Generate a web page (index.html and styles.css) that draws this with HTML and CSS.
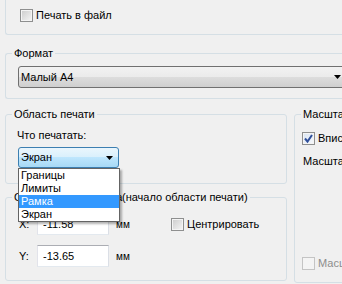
FILE: index.html
```html
<!DOCTYPE html>
<html>
<head>
    <title>Печать</title>
    <link rel="stylesheet" href="styles.css">
</head>
<body>
    <div class="dialog">
        <div class="file-box">
            <label class="check"><span class="box"></span>Печать в файл</label>
        </div>

        <fieldset class="group format-group">
            <legend>Формат</legend>
            <div class="combo combo-wide">
                <span class="combo-text">Малый A4</span>
                <svg class="arrow" width="7" height="4" viewBox="0 0 7 4"><path d="M0 0h7L3.5 4z"/></svg>
            </div>
        </fieldset>

        <div class="columns">
            <div class="left-col">
                <fieldset class="group area-group">
                    <legend>Область печати</legend>
                    <div class="field-label">Что печатать:</div>
                    <div class="combo-wrap">
                        <div class="combo combo-hot">
                            <span class="combo-text">Экран</span>
                            <svg class="arrow" width="7" height="4" viewBox="0 0 7 4"><path d="M0 0h7L3.5 4z"/></svg>
                        </div>
                        <ul class="dropdown">
                            <li>Границы</li>
                            <li>Лимиты</li>
                            <li class="selected">Рамка</li>
                            <li>Экран</li>
                        </ul>
                    </div>
                </fieldset>

                <fieldset class="group offset-group">
                    <legend><span class="legend-lead">Смещение от начала</span>(начало области печати)</legend>
                    <div class="offset-row">
                        <span class="axis">X:</span>
                        <input class="num" type="text" value="-11.58">
                        <span class="unit">мм</span>
                        <label class="check"><span class="box"></span>Центрировать</label>
                    </div>
                    <div class="offset-row">
                        <span class="axis">Y:</span>
                        <input class="num" type="text" value="-13.65">
                        <span class="unit">мм</span>
                    </div>
                </fieldset>
            </div>

            <fieldset class="group scale-group">
                <legend>Масштаб печати</legend>
                <label class="check fit-check">
                    <span class="box checked">
                        <svg width="11" height="11" viewBox="0 0 11 11"><path d="M2 5.5l2.5 3L9 2" fill="none" stroke="#2f4f9a" stroke-width="2"/></svg>
                    </span>Вписать в формат
                </label>
                <div class="field-label scale-label">Масштаб:</div>
                <label class="check disabled lw-check"><span class="box"></span>Масштабировать веса линий</label>
            </fieldset>
        </div>
    </div>
</body>
</html>
```

FILE: styles.css
```css
* {
    box-sizing: border-box;
}
body {
    margin: 0;
    background-color: #f0f0f0;
    color: black;
    font-family: "Liberation Sans", Arial, sans-serif;
    font-size: 11px;
    line-height: 13px;
    overflow: hidden;
}
.dialog {
    width: 420px;
    height: 284px;
    padding-left: 5px;
}
.file-box {
    height: 35px;
    padding: 9px 0 0 14px;
    border-left: 1px solid #d5dfe5;
    border-bottom: 1px solid #d5dfe5;
    border-bottom-left-radius: 3px;
}
.check {
    display: flex;
    align-items: center;
    height: 13px;
    white-space: nowrap;
}
.box {
    width: 13px;
    height: 13px;
    margin-right: 3px;
    border: 1px solid #8e8f8f;
    background: linear-gradient(135deg, #cbcbcb, #f6f6f6);
    box-shadow: inset 0 0 0 1px #f4f4f4;
    flex-shrink: 0;
}
.box.checked {
    background: linear-gradient(135deg, #d9e4f2, #f7f9fc);
}
.box svg {
    display: block;
    margin: 0;
}
.disabled {
    color: #8d8d8d;
}
.disabled .box {
    border-color: #c4c4c4;
    background: #f4f4f4;
}

.group {
    margin: 0;
    padding: 0 0 0 6px;
    border: 1px solid #d5dfe5;
    border-radius: 3px;
    min-width: 0;
}
.group legend {
    padding: 0 2px;
    line-height: 13px;
    white-space: nowrap;
}
.legend-lead {
    display: inline-block;
    width: 108px;
}

.format-group {
    margin-top: 12px;
    padding-top: 6px;
    padding-bottom: 10px;
    border-right: none;
    border-top-right-radius: 0;
    border-bottom-right-radius: 0;
}
.combo {
    display: flex;
    align-items: center;
    justify-content: space-between;
    height: 22px;
    padding: 0 5px 0 2px;
    border: 1px solid #707070;
    border-radius: 3px;
    background: linear-gradient(#f2f2f2 0%, #ebebeb 50%, #dddddd 50%, #cfcfcf 100%);
}
.combo-wide {
    width: 329px;
    margin-left: 6px;
    padding-right: 5px;
}
.combo-hot {
    height: 21px;
    width: 101px;
    border-color: #3c7fb1;
    background: linear-gradient(#eaf6fd 0%, #d9f0fc 50%, #bee6fd 50%, #a7d9f5 100%);
}

.columns {
    display: flex;
    gap: 7px;
    margin-top: 9px;
}
.left-col {
    width: 282px;
    flex-shrink: 0;
}
.area-group {
    padding-bottom: 15px;
}
.field-label {
    margin: 8px 0 0 5px;
}
.combo-wrap {
    position: relative;
    margin: 5px 0 0 6px;
    width: 101px;
}
.dropdown {
    position: absolute;
    top: 100%;
    left: 0;
    width: 102px;
    margin: 0;
    padding: 0;
    list-style: none;
    background: white;
    border: 1px solid #646464;
    box-shadow: 2px 2px 2px rgba(0, 0, 0, 0.3);
    z-index: 2;
}
.dropdown li {
    height: 13px;
    padding-left: 2px;
}
.dropdown .selected {
    background-color: #3399ff;
    color: white;
}

.offset-group {
    margin-top: 7px;
    padding-top: 9px;
    padding-bottom: 13px;
}
.offset-row {
    display: flex;
    align-items: center;
    height: 22px;
    padding-left: 7px;
}
.offset-row + .offset-row {
    margin-top: 10px;
}
.axis {
    width: 18px;
}
.num {
    width: 72px;
    height: 22px;
    padding: 0 0 0 5px;
    border: 1px solid;
    border-color: #abadb3 #dbdfe6 #e3e9ef #e2e3ea;
    background: white;
    font: inherit;
    color: black;
}
.unit {
    width: 62px;
    padding-left: 7px;
    font-size: 10px;
}

.scale-group {
    height: 175px;
    padding-top: 11px;
    flex: 1;
}
.fit-check {
    margin-left: 1px;
}
.scale-label {
    margin: 10px 0 0 2px;
}
.lw-check {
    margin: 89px 0 0 1px;
}
```
